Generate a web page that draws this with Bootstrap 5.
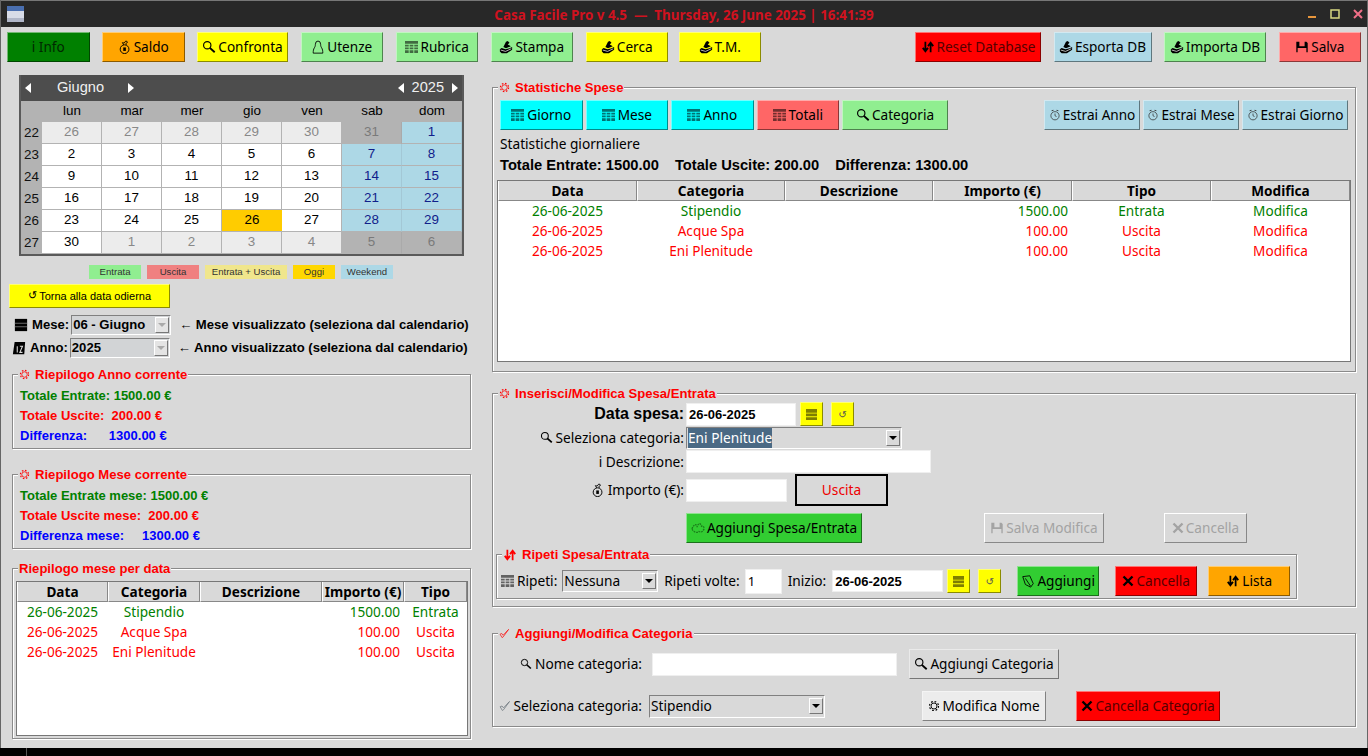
<!DOCTYPE html>
<html lang="it">
  <head>
    <meta charset="UTF-8" />
    <title>Casa Facile Pro</title>
    <link href="https://cdn.jsdelivr.net/npm/bootstrap@5.3.0/dist/css/bootstrap.min.css" rel="stylesheet" />
    <style>
      html, body { height: 100%; overflow: hidden; }
      body { background: #d9d9d9; color: #000; font-family: "Noto Sans", sans-serif; font-size: 13.7px; }
      .app-win { width: 1368px; height: 756px; border-left: 1px solid #666; border-right: 1px solid #666; position: relative; }
      .title-bar { height: 27px; background: #282828; border-top: 1px solid #777; padding: 0 4px 0 6px; }
      .title-text { color: #d0121f; font-weight: 700; font-size: 13.4px; white-space: pre; position: absolute; left: 0; right: 0; top: 5px; text-align: center; }
      .win-ico { width: 17px; height: 16px; }
      .win-ctl { width: 10px; height: 10px; }
      .win-btns { gap: 13px; }
      .tool-row { padding: 5px 6px 0 6px; height: 35px; }
      .tk-btn { display: inline-flex; align-items: center; justify-content: center; gap: 2px; height: 30px; padding: 0; border-radius: 0; font-family: "Noto Sans", sans-serif; font-size: 13.6px; color: #000; white-space: nowrap; border: 1px solid; border-color: rgba(255,255,255,.45) rgba(0,0,0,.45) rgba(0,0,0,.45) rgba(255,255,255,.45); }
      .tk-btn:disabled { opacity: 1; color: #a3a3a3; background: #d9d9d9; border-color: #fff #888 #888 #fff; }
      .tint-green { background: #008000; color: #002800; }
      .tint-orange { background: #ffa500; }
      .tint-yellow { background: #ff0; }
      .tint-light { background: #90ee90; }
      .tint-red { background: #f00; color: #500; }
      .tint-red svg { color: #000; }
      .tint-blue { background: #add8e6; }
      .tint-coral { background: #f66; }
      .tint-cyan { background: #0ff; }
      .tint-lime { background: #32cd32; }
      .tint-gray { background: #d9d9d9; }
      .tint-pale { background: #ececec; }
      .ico { width: 14px; height: 14px; flex: none; }
      .ico-sm { width: 12px; height: 12px; flex: none; }
      .ico-grid { width: 13px; height: 13px; flex: none; margin-right: 1px; }
      .ico-block { width: 11px; height: 11px; flex: none; }
      .ico-dim { color: #333; }
      .ico-sprig { color: #1a7a1a; }
      .w-82 { width: 82.5px; }
      .w-91 { width: 91px; }
      .w-126 { width: 126px; }
      .w-98 { width: 98px; }
      .w-102 { width: 102px; }
      .w-96 { width: 96px; }
      .w-106 { width: 106px; }
      .gap-tool { gap: 12.5px; }
      .gap-thin { gap: 3px; }
      .tm-btn { margin-left: -2px; }

      .left-col { width: 491px; flex: none; }
      .right-col { width: 864px; flex: none; }

      .cal-box { margin: 13px 0 0 18px; width: 445px; height: 181px; background: #4d4d4d; border: 2px solid #5a5a5a; border-top: 0; font-family: "Liberation Sans", sans-serif; }
      .cal-head { height: 26px; color: #f0f0f0; font-size: 14.6px; }
      .cal-arrow { width: 6px; height: 10px; fill: #fff; flex: none; }
      .cal-month { width: 46px; margin: 0 25px 0 26px; text-align: center; }
      .cal-grid { display: grid; grid-template-columns: 21px repeat(7, 60px); grid-template-rows: 21px repeat(6, 22px); background: #b3b3b3; font-size: 13.4px; }
      .cal-grid > div { display: flex; align-items: center; justify-content: center; }
      .cal-wk { color: #111; }
      .cal-day { background: #fff; border-right: 1px solid #b3b3b3; border-bottom: 1px solid #b3b3b3; }
      .cal-off { background: #ececec; color: #888; border-right: 1px solid #b3b3b3; border-bottom: 1px solid #b3b3b3; }
      .cal-offw { background: #b3b3b3; color: #7a7a7a; border-right: 1px solid #aaa; border-bottom: 1px solid #b3b3b3; }
      .cal-we { background: #add8e6; color: #10208a; border-right: 1px solid #a3c8d6; border-bottom: 1px solid #b3b3b3; }
      .cal-now { background: #ffcc00; border-bottom: 1px solid #b3b3b3; }

      .key-row { margin: 9px 0 0 88px; gap: 6px; height: 14px; font-family: "Liberation Sans", sans-serif; font-size: 9.6px; color: #333; }
      .key-tag { display: flex; align-items: center; justify-content: center; height: 14px; }
      .key-52 { width: 52px; }
      .key-82 { width: 82px; }
      .key-42 { width: 42px; }
      .key-khaki { background: #f0e68c; }
      .key-gold { background: #ffd700; }
      .key-rose { background: #f08080; }
      .back-btn { margin: 5px 0 0 8px; width: 161px; height: 24px; font-family: "Liberation Sans", sans-serif; font-size: 11px; }
      .uni { font-family: "DejaVu Sans", sans-serif; font-weight: 400; }
      .thin-arrow { font-weight: 400; }
      .sel-row { height: 20px; font-family: "Liberation Sans", sans-serif; font-weight: 700; font-size: 13.1px; white-space: nowrap; }
      .sel-row .ico { margin-right: 4px; }
      .sel-mese { margin: 7px 0 0 13px; }
      .sel-anno { margin: 3px 0 0 11px; }
      .combo-fld { display: flex; align-items: center; justify-content: space-between; background: #d9d9d9; border: 1px solid; border-color: #808080 #fff #fff #808080; padding-left: 1px; white-space: nowrap; overflow: hidden; }
      .combo-off { background: #d2d4d6; height: 20px; width: 100px; margin-left: 2px; }
      .sel-note { margin-left: 8px; }
      .combo-drop { width: 14px; height: 16px; flex: none; margin-right: 1px; background: #d9d9d9; border: 1px solid; border-color: #fff #777 #777 #fff; display: flex; align-items: center; justify-content: center; }
      .combo-drop i { display: block; border-left: 4px solid transparent; border-right: 4px solid transparent; border-top: 4px solid #000; }
      .combo-off .combo-drop i { border-top-color: #aaa; }
      .combo-off .combo-drop { background: #e4e4e4; }

      .group-box { position: relative; border: 1px solid #8a8a8a; box-shadow: inset 1px 1px 0 #fff, 1px 1px 0 #fff; }
      .group-cap { position: absolute; left: 5px; top: -9px; background: #d9d9d9; color: #f00; font-family: "Liberation Sans", sans-serif; font-weight: 700; font-size: 13.1px; line-height: 17px; padding: 0 1px; display: flex; align-items: center; gap: 5px; white-space: nowrap; }
      .group-cap .ico-sm { width: 11px; height: 11px; }
      .sum-box { margin-left: 11px; width: 459px; height: 75px; padding: 11px 0 0 7px; font-family: "Liberation Sans", sans-serif; font-weight: 700; font-size: 13px; line-height: 20px; }
      .sum-box > div { white-space: pre; }
      .sum-anno { margin-top: 16px; }
      .sum-mese { margin-top: 25px; }
      .ink-g { color: #008000; }
      .ink-r { color: #f00; }
      .ink-b { color: #00f; }
      .sum-data { margin: 19px 0 0 11px; width: 459px; height: 171px; padding: 12px 2px 0 3px; }

      .tree-view { background: #fff; border: 1px solid #777; overflow: hidden; }
      .tree-side { height: 155px; }
      .tree-main { height: 182px; width: 854px; margin-left: -3px; }
      .tree-tab { table-layout: fixed; width: 100%; border-collapse: separate; border-spacing: 0; font-size: 13.6px; line-height: 19px; }
      .tree-tab th { height: 20px; background: #d9d9d9; font-weight: 700; text-align: center; border-left: 1px solid #fff; border-right: 1px solid #888; border-bottom: 1px solid #888; padding: 0; white-space: nowrap; }
      .tree-tab td { height: 20px; text-align: center; line-height: 20px; padding: 0; white-space: nowrap; }
      .tree-tab td.amt { text-align: right; padding-right: 4px; }
      .tree-side th:nth-child(1) { width: 91px; }
      .tree-side th:nth-child(2) { width: 92px; }
      .tree-side th:nth-child(3) { width: 122px; }
      .tree-side th:nth-child(4) { width: 82px; }
      .tree-main th:nth-child(1) { width: 139px; }
      .tree-main th:nth-child(2) { width: 148px; }
      .tree-main th:nth-child(3) { width: 148px; }
      .tree-main th:nth-child(4) { width: 139px; }
      .tree-main th:nth-child(5) { width: 139px; }

      .stat-box { margin-top: 25px; width: 864px; height: 285px; padding: 12px 7px 0 7px; }
      .stat-tot { height: 20px; margin-top: 1px; gap: 16px; font-family: "Liberation Sans", sans-serif; font-weight: 700; font-size: 14.7px; line-height: 20px; }
      .stat-sub { height: 20px; line-height: 20px; margin-top: 4px; }
      .tree-gap { margin-top: 5px; }

      .edit-box { margin-top: 21px; width: 864px; height: 214px; padding-top: 8px; }
      .form-line { display: flex; align-items: center; }
      .line-a { height: 24px; }
      .line-b { height: 22px; margin-top: 1px; }
      .line-c { height: 23px; margin-top: 1px; }
      .line-c .lab-col { padding-top: 2px; }
      .line-d { height: 32px; margin-top: 1px; }
      .line-e { height: 30px; margin-top: 7px; }
      .lab-col { width: 191px; flex: none; display: flex; align-items: center; justify-content: flex-end; gap: 3px; white-space: nowrap; }
      .lab-col .ico-sm { width: 13px; height: 13px; }
      .lab-big { font-family: "Liberation Sans", sans-serif; font-weight: 700; font-size: 16px; }
      .form-control.tk-entry { padding: 0 2px; border-radius: 0; border: 1px solid #efefef; background: #fff; height: 23px; min-height: 0; font-family: "Liberation Sans", sans-serif; font-weight: 700; font-size: 13px; color: #000; box-shadow: none; }
      .form-control.en-110, .form-control.en-245, .form-control.en-101 { margin-left: 2px; flex: none; }
      .form-control.en-110 { width: 110px; }
      .form-control.en-245 { width: 245px; }
      .form-control.en-101 { width: 101px; }
      .mini-btn { width: 23px; height: 24px; flex: none; background: #ff0; }
      .mini-btn .uni { font-size: 10px; color: #555; }
      .mini-gap { margin-left: 4px; }
      .mini-gap2 { margin-left: 8px; }
      .combo-main { width: 216px; height: 22px; margin-left: 2px; }
      .sel-hi { background: #4a6984; color: #fff; line-height: 20px; height: 20px; }
      .type-box { width: 93px; height: 32px; margin-left: 8px; border: 2px solid #000; color: #e00; display: flex; align-items: center; justify-content: center; }
      .add-btn { width: 176px; margin-left: 193px; }
      .save-off { width: 120px; margin-left: 122px; }
      .undo-off { width: 83px; margin-left: 60px; }

      .rep-box { margin: 11px 0 0 3px; width: 801px; height: 45px; padding: 11px 0 0 4px; }
      .rep-row { height: 30px; white-space: nowrap; }
      .rep-lab { margin-left: 2px; }
      .combo-rep { width: 96px; height: 22px; margin-left: 5px; }
      .form-control.en-37 { width: 37px; height: 25px; margin-left: 5px; flex: none; font-weight: 400; font-family: "Noto Sans", sans-serif; }
      .form-control.en-111 { width: 111px; margin-left: 6px; flex: none; height: 22px; }
      .lab-a { margin-left: 6px; }
      .rep-btn { width: 82px; }
      .rep-m17 { margin-left: 16px; }
      .rep-m16 { margin-left: 16px; }
      .rep-m11 { margin-left: 11px; }

      .cat-box { margin-top: 26px; width: 864px; height: 94px; padding-top: 15px; }
      .cat-row { height: 30px; white-space: nowrap; }
      .cat-row + .cat-row { margin-top: 12px; }
      .cat-lab { width: 149px; flex: none; display: flex; align-items: center; justify-content: flex-end; gap: 3px; }
      .form-control.en-245b { width: 245px; margin-left: 10px; flex: none; }
      .cat-add { width: 150px; margin-left: 12px; }
      .combo-cat { width: 176px; height: 23px; margin-left: 7px; }
      .cat-mod { width: 124px; margin-left: 97px; }
      .cat-del { width: 144px; margin-left: 30px; }
      .foot-bar { position: absolute; left: -1px; right: -1px; top: 748px; height: 8px; background: #000; }
      .foot-bar i { position: absolute; left: 26px; top: 0; width: 1px; height: 8px; background: #555; }
    </style>
  </head>
  <body>
    <svg width="0" height="0" class="position-absolute">
      <symbol id="i-search" viewBox="0 0 16 16"><circle cx="6" cy="6" r="4.2" fill="none" stroke="currentColor" stroke-width="1.3" /><path d="M9 9l5.5 5" stroke="currentColor" stroke-width="2.2" /></symbol>
      <symbol id="i-bag" viewBox="0 0 16 16"><circle cx="7.5" cy="10.5" r="5" fill="none" stroke="currentColor" stroke-width="1.1" /><path d="M6 8.500h3v4H6z" fill="currentColor" /><path d="M6.500 5.500L5 3l2 .5L9 1l2 1.500-2 1.500.5 1.500" fill="none" stroke="currentColor" stroke-width="1" /></symbol>
      <symbol id="i-user" viewBox="0 0 16 16"><path d="M5 5a3 3.800 0 1 1 6 0c0 2 .6 3 1.300 4.200.8 1.400 1.200 3 1.200 5.800H2.500c0-2.800.4-4.400 1.200-5.800C4.400 8 5 7 5 5z" fill="none" stroke="currentColor" stroke-width="1" /></symbol>
      <symbol id="i-grid" viewBox="1 1 14 14"><path d="M1 1h14v3H1zM1 5h4v2H1zM6 5h4v2H6zM11 5h4v2h-4zM1 8h4v2H1zM6 8h4v2H6zM11 8h4v2h-4zM1 11h4v3H1zM6 11h4v3H6zM11 11h4v3h-4z" fill="#000" fill-opacity=".55" /></symbol>
      <symbol id="i-block" viewBox="0 0 12 12"><path d="M0 0h12v4H0zM0 5h12v3H0zM0 9h12v3H0z" fill="#000" fill-opacity=".5" /></symbol>
      <symbol id="i-print" viewBox="0 0 16 16"><path d="M1 10.500L3 9l4.500 1.500L12 9.500 15 8v3l-6 4H3l-2-2z" fill="currentColor" /><path d="M5 8l3-6 2-1 2 2-2 2 3.500 2L8 9.500z" fill="currentColor" /><path d="M2 11.500l5.500 1.500L14 10" fill="none" stroke="#fff" stroke-width=".8" /></symbol>
      <symbol id="i-swap" viewBox="0 0 16 16"><path d="M5 2v10M2 9l3 4 3-4M11 14V4M8 7l3-4 3 4" fill="none" stroke="currentColor" stroke-width="2" /></symbol>
      <symbol id="i-save" viewBox="0 0 16 16"><path d="M1.500 2h3.500v5h6V2h2l1.500 1.500V14h-1.500V9H3v5H1.500z" fill="currentColor" /></symbol>
      <symbol id="i-x" viewBox="0 0 16 16"><path d="M2 2l12 12M14 2L2 14" stroke="currentColor" stroke-width="3.200" /></symbol>
      <symbol id="i-clock" viewBox="0 0 16 16"><circle cx="8" cy="9" r="5.500" fill="none" stroke="currentColor" stroke-width="1" /><path d="M8 6v3l2 1" fill="none" stroke="currentColor" stroke-width="1" /><path d="M3.500 2.500L6 1.500M12.500 2.500L10 1.500" stroke="currentColor" stroke-width="1.400" /></symbol>
      <symbol id="i-gear" viewBox="0 0 16 16"><circle cx="8" cy="8" r="4" fill="none" stroke="currentColor" stroke-width="1.200" /><circle cx="8" cy="8" r="6" fill="none" stroke="currentColor" stroke-width="1.600" stroke-dasharray="2.300 2.420" /></symbol>
      <symbol id="i-check" viewBox="0 0 16 16"><path d="M1.500 9l3 5 1.500-1 8-11-8 8.500-2-2.500z" fill="none" stroke="currentColor" stroke-width="1" /></symbol>
      <symbol id="i-leaf" viewBox="0 0 16 16"><path d="M2 3l8-1 4 9-3 4-6-3zM5 5l6 9" fill="none" stroke="currentColor" stroke-width="1" /></symbol>
      <symbol id="i-sprig" viewBox="0 0 16 16"><path d="M1 9c3-6 5-6 6-2 1-5 4-5 5-1 2-1 3 1 3 3-2 4-4 4-6 3-2 2-6 1-8-3z" fill="none" stroke="currentColor" stroke-width="1.400" stroke-dasharray="2 1" /></symbol>
      <symbol id="i-cal" viewBox="0 0 16 16"><path d="M1 1h14v14H1z" fill="currentColor" /><path d="M1 6h14M1 10h14" stroke="#777" stroke-width="1" /></symbol>
      <symbol id="i-cal12" viewBox="0 0 16 16"><path d="M3 1h12l-1 14H1z" fill="currentColor" /><path d="M6 6v7M9 6h3l-3 7h3" fill="none" stroke="#ddd" stroke-width="1.200" /></symbol>
    </svg>

    <div class="app-win d-flex flex-column">
      <div class="title-bar d-flex align-items-center">
        <svg class="win-ico" viewBox="0 0 17 16"><rect width="17" height="16" fill="#d8dce8" /><rect width="17" height="5" fill="#4a6fb0" /><rect y="12" width="17" height="4" fill="#b0b6c8" /></svg>
        <span class="title-text">Casa Facile Pro v 4.5  —  Thursday, 26 June 2025 | 16:41:39</span>
        <div class="ms-auto d-flex align-items-center win-btns">
          <svg class="win-ctl" viewBox="0 0 10 10"><path d="M1 8h8" stroke="#e8963c" stroke-width="2" /></svg>
          <svg class="win-ctl" viewBox="0 0 10 10"><path d="M1 1h8v8H1z" fill="none" stroke="#d8d880" stroke-width="1.500" /></svg>
          <svg class="win-ctl" viewBox="0 0 10 10"><path d="M1 1l8 8M9 1l-8 8" stroke="#f07088" stroke-width="2" /></svg>
        </div>
      </div>

      <div class="tool-row d-flex">
        <div class="d-flex gap-tool">
          <button class="btn tk-btn w-82 tint-green">i Info</button>
          <button class="btn tk-btn w-82 tint-orange"><svg class="ico"><use href="#i-bag" /></svg>Saldo</button>
          <button class="btn tk-btn w-91 tint-yellow"><svg class="ico"><use href="#i-search" /></svg>Confronta</button>
          <button class="btn tk-btn w-82 tint-light"><svg class="ico"><use href="#i-user" /></svg>Utenze</button>
          <button class="btn tk-btn w-82 tint-light"><svg class="ico-grid"><use href="#i-grid" /></svg>Rubrica</button>
          <button class="btn tk-btn w-82 tint-light"><svg class="ico"><use href="#i-print" /></svg>Stampa</button>
          <button class="btn tk-btn w-82 tint-yellow"><svg class="ico"><use href="#i-print" /></svg>Cerca</button>
          <button class="btn tk-btn w-82 tint-yellow tm-btn"><svg class="ico"><use href="#i-print" /></svg>T.M.</button>
        </div>
        <div class="ms-auto d-flex gap-tool">
          <button class="btn tk-btn w-126 tint-red"><svg class="ico"><use href="#i-swap" /></svg>Reset Database</button>
          <button class="btn tk-btn w-98 tint-blue"><svg class="ico"><use href="#i-print" /></svg>Esporta DB</button>
          <button class="btn tk-btn w-102 tint-light"><svg class="ico"><use href="#i-print" /></svg>Importa DB</button>
          <button class="btn tk-btn w-82 tint-coral"><svg class="ico"><use href="#i-save" /></svg>Salva</button>
        </div>
      </div>

      <div class="d-flex">
        <div class="left-col">
          <div class="cal-box">
            <div class="cal-head d-flex align-items-center">
              <svg class="cal-arrow ms-1" viewBox="0 0 6 10"><path d="M6 0v10L0 5z" /></svg>
              <span class="cal-month">Giugno</span>
              <svg class="cal-arrow" viewBox="0 0 6 10"><path d="M0 0v10l6-5z" /></svg>
              <svg class="cal-arrow ms-auto" viewBox="0 0 6 10"><path d="M6 0v10L0 5z" /></svg>
              <span class="mx-2">2025</span>
              <svg class="cal-arrow me-1" viewBox="0 0 6 10"><path d="M0 0v10l6-5z" /></svg>
            </div>
            <div class="cal-grid">
              <div></div><div>lun</div><div>mar</div><div>mer</div><div>gio</div><div>ven</div><div>sab</div><div>dom</div>
              <div class="cal-wk">22</div><div class="cal-off">26</div><div class="cal-off">27</div><div class="cal-off">28</div><div class="cal-off">29</div><div class="cal-off">30</div><div class="cal-offw">31</div><div class="cal-we">1</div>
              <div class="cal-wk">23</div><div class="cal-day">2</div><div class="cal-day">3</div><div class="cal-day">4</div><div class="cal-day">5</div><div class="cal-day">6</div><div class="cal-we">7</div><div class="cal-we">8</div>
              <div class="cal-wk">24</div><div class="cal-day">9</div><div class="cal-day">10</div><div class="cal-day">11</div><div class="cal-day">12</div><div class="cal-day">13</div><div class="cal-we">14</div><div class="cal-we">15</div>
              <div class="cal-wk">25</div><div class="cal-day">16</div><div class="cal-day">17</div><div class="cal-day">18</div><div class="cal-day">19</div><div class="cal-day">20</div><div class="cal-we">21</div><div class="cal-we">22</div>
              <div class="cal-wk">26</div><div class="cal-day">23</div><div class="cal-day">24</div><div class="cal-day">25</div><div class="cal-now">26</div><div class="cal-day">27</div><div class="cal-we">28</div><div class="cal-we">29</div>
              <div class="cal-wk">27</div><div class="cal-day">30</div><div class="cal-off">1</div><div class="cal-off">2</div><div class="cal-off">3</div><div class="cal-off">4</div><div class="cal-offw">5</div><div class="cal-offw">6</div>
            </div>
          </div>

          <div class="key-row d-flex">
            <span class="key-tag key-52 tint-light">Entrata</span>
            <span class="key-tag key-52 key-rose">Uscita</span>
            <span class="key-tag key-82 key-khaki">Entrata + Uscita</span>
            <span class="key-tag key-42 key-gold">Oggi</span>
            <span class="key-tag key-52 tint-blue">Weekend</span>
          </div>

          <button class="btn tk-btn back-btn tint-yellow"><span class="uni">↺</span> Torna alla data odierna</button>

          <div class="sel-row sel-mese d-flex align-items-center">
            <svg class="ico"><use href="#i-cal" /></svg>
            <span>Mese:</span>
            <div class="combo-fld combo-off"><span>06 - Giugno</span><span class="combo-drop"><i></i></span></div>
            <span class="sel-note"><span class="thin-arrow">←</span> Mese visualizzato (seleziona dal calendario)</span>
          </div>
          <div class="sel-row sel-anno d-flex align-items-center">
            <svg class="ico"><use href="#i-cal12" /></svg>
            <span>Anno:</span>
            <div class="combo-fld combo-off"><span>2025</span><span class="combo-drop"><i></i></span></div>
            <span class="sel-note"><span class="thin-arrow">←</span> Anno visualizzato (seleziona dal calendario)</span>
          </div>

          <div class="group-box sum-box sum-anno">
            <div class="group-cap"><svg class="ico-sm"><use href="#i-gear" /></svg>Riepilogo Anno corrente</div>
            <div class="ink-g">Totale Entrate: 1500.00 €</div>
            <div class="ink-r">Totale Uscite:  200.00 €</div>
            <div class="ink-b">Differenza:      1300.00 €</div>
          </div>
          <div class="group-box sum-box sum-mese">
            <div class="group-cap"><svg class="ico-sm"><use href="#i-gear" /></svg>Riepilogo Mese corrente</div>
            <div class="ink-g">Totale Entrate mese: 1500.00 €</div>
            <div class="ink-r">Totale Uscite mese:  200.00 €</div>
            <div class="ink-b">Differenza mese:     1300.00 €</div>
          </div>
          <div class="group-box sum-data">
            <div class="group-cap">Riepilogo mese per data</div>
            <div class="tree-view tree-side">
              <table class="tree-tab">
                <thead><tr><th>Data</th><th>Categoria</th><th>Descrizione</th><th>Importo (€)</th><th>Tipo</th></tr></thead>
                <tbody>
                  <tr class="ink-g"><td>26-06-2025</td><td>Stipendio</td><td></td><td class="amt">1500.00</td><td>Entrata</td></tr>
                  <tr class="ink-r"><td>26-06-2025</td><td>Acque Spa</td><td></td><td class="amt">100.00</td><td>Uscita</td></tr>
                  <tr class="ink-r"><td>26-06-2025</td><td>Eni Plenitude</td><td></td><td class="amt">100.00</td><td>Uscita</td></tr>
                </tbody>
              </table>
            </div>
          </div>
        </div>

        <div class="right-col">
          <div class="group-box stat-box">
            <div class="group-cap"><svg class="ico-sm"><use href="#i-gear" /></svg>Statistiche Spese</div>
            <div class="d-flex">
              <div class="d-flex gap-thin">
                <button class="btn tk-btn w-82 tint-cyan"><svg class="ico-grid"><use href="#i-grid" /></svg>Giorno</button>
                <button class="btn tk-btn w-82 tint-cyan"><svg class="ico-grid"><use href="#i-grid" /></svg>Mese</button>
                <button class="btn tk-btn w-82 tint-cyan"><svg class="ico-grid"><use href="#i-grid" /></svg>Anno</button>
                <button class="btn tk-btn w-82 tint-coral"><svg class="ico-grid"><use href="#i-grid" /></svg>Totali</button>
                <button class="btn tk-btn w-106 tint-light"><svg class="ico"><use href="#i-search" /></svg>Categoria</button>
              </div>
              <div class="ms-auto d-flex gap-thin">
                <button class="btn tk-btn w-96 tint-blue"><svg class="ico-sm ico-dim"><use href="#i-clock" /></svg>Estrai Anno</button>
                <button class="btn tk-btn w-96 tint-blue"><svg class="ico-sm ico-dim"><use href="#i-clock" /></svg>Estrai Mese</button>
                <button class="btn tk-btn w-106 tint-blue"><svg class="ico-sm ico-dim"><use href="#i-clock" /></svg>Estrai Giorno</button>
              </div>
            </div>
            <div class="stat-sub">Statistiche giornaliere</div>
            <div class="stat-tot d-flex">
              <span>Totale Entrate: 1500.00</span><span>Totale Uscite: 200.00</span><span>Differenza: 1300.00</span>
            </div>
            <div class="tree-view tree-main tree-gap">
              <table class="tree-tab">
                <thead><tr><th>Data</th><th>Categoria</th><th>Descrizione</th><th>Importo (€)</th><th>Tipo</th><th>Modifica</th></tr></thead>
                <tbody>
                  <tr class="ink-g"><td>26-06-2025</td><td>Stipendio</td><td></td><td class="amt">1500.00</td><td>Entrata</td><td>Modifica</td></tr>
                  <tr class="ink-r"><td>26-06-2025</td><td>Acque Spa</td><td></td><td class="amt">100.00</td><td>Uscita</td><td>Modifica</td></tr>
                  <tr class="ink-r"><td>26-06-2025</td><td>Eni Plenitude</td><td></td><td class="amt">100.00</td><td>Uscita</td><td>Modifica</td></tr>
                </tbody>
              </table>
            </div>
          </div>

          <div class="group-box edit-box">
            <div class="group-cap"><svg class="ico-sm"><use href="#i-gear" /></svg>Inserisci/Modifica Spesa/Entrata</div>
            <div class="form-line line-a">
              <div class="lab-col lab-big">Data spesa:</div>
              <input class="form-control tk-entry en-110" value="26-06-2025" />
              <button class="btn tk-btn mini-btn mini-gap"><svg class="ico-block"><use href="#i-block" /></svg></button>
              <button class="btn tk-btn mini-btn mini-gap2"><span class="uni">↺</span></button>
            </div>
            <div class="form-line line-b">
              <div class="lab-col"><svg class="ico-sm"><use href="#i-search" /></svg>Seleziona categoria:</div>
              <div class="combo-fld combo-main"><span class="sel-hi">Eni Plenitude</span><span class="combo-drop"><i></i></span></div>
            </div>
            <div class="form-line line-c">
              <div class="lab-col">i Descrizione:</div>
              <input class="form-control tk-entry en-245" />
            </div>
            <div class="form-line line-d">
              <div class="lab-col"><svg class="ico"><use href="#i-bag" /></svg>Importo (€):</div>
              <input class="form-control tk-entry en-101" />
              <div class="type-box">Uscita</div>
            </div>
            <div class="form-line line-e">
              <button class="btn tk-btn add-btn tint-lime"><svg class="ico ico-sprig"><use href="#i-sprig" /></svg>Aggiungi Spesa/Entrata</button>
              <button class="btn tk-btn save-off" disabled><svg class="ico"><use href="#i-save" /></svg>Salva Modifica</button>
              <button class="btn tk-btn undo-off" disabled><svg class="ico-sm"><use href="#i-x" /></svg>Cancella</button>
            </div>
            <div class="group-box rep-box">
              <div class="group-cap"><svg class="ico"><use href="#i-swap" /></svg>Ripeti Spesa/Entrata</div>
              <div class="rep-row d-flex align-items-center">
                <svg class="ico-grid"><use href="#i-grid" /></svg>
                <span class="rep-lab">Ripeti:</span>
                <div class="combo-fld combo-rep"><span>Nessuna</span><span class="combo-drop"><i></i></span></div>
                <span class="lab-a">Ripeti volte:</span>
                <input class="form-control tk-entry en-37" value="1" />
                <span class="lab-a">Inizio:</span>
                <input class="form-control tk-entry en-111" value="26-06-2025" />
                <button class="btn tk-btn mini-btn mini-gap"><svg class="ico-block"><use href="#i-block" /></svg></button>
                <button class="btn tk-btn mini-btn mini-gap2"><span class="uni">↺</span></button>
                <button class="btn tk-btn rep-btn rep-m17 tint-lime"><svg class="ico"><use href="#i-leaf" /></svg>Aggiungi</button>
                <button class="btn tk-btn rep-btn rep-m16 tint-red"><svg class="ico-sm"><use href="#i-x" /></svg>Cancella</button>
                <button class="btn tk-btn rep-btn rep-m11 tint-orange"><svg class="ico"><use href="#i-swap" /></svg>Lista</button>
              </div>
            </div>
          </div>

          <div class="group-box cat-box">
            <div class="group-cap"><svg class="ico-sm"><use href="#i-check" /></svg>Aggiungi/Modifica Categoria</div>
            <div class="cat-row d-flex align-items-center">
              <div class="cat-lab"><svg class="ico-sm"><use href="#i-search" /></svg>Nome categoria:</div>
              <input class="form-control tk-entry en-245b" />
              <button class="btn tk-btn cat-add tint-gray"><svg class="ico"><use href="#i-search" /></svg>Aggiungi Categoria</button>
            </div>
            <div class="cat-row d-flex align-items-center">
              <div class="cat-lab"><svg class="ico-sm text-secondary"><use href="#i-check" /></svg>Seleziona categoria:</div>
              <div class="combo-fld combo-cat"><span>Stipendio</span><span class="combo-drop"><i></i></span></div>
              <button class="btn tk-btn cat-mod tint-pale"><svg class="ico-sm"><use href="#i-gear" /></svg>Modifica Nome</button>
              <button class="btn tk-btn cat-del tint-red"><svg class="ico-sm"><use href="#i-x" /></svg>Cancella Categoria</button>
            </div>
          </div>
        </div>
      </div>

      <div class="foot-bar"><i></i></div>
    </div>
  </body>
</html>
